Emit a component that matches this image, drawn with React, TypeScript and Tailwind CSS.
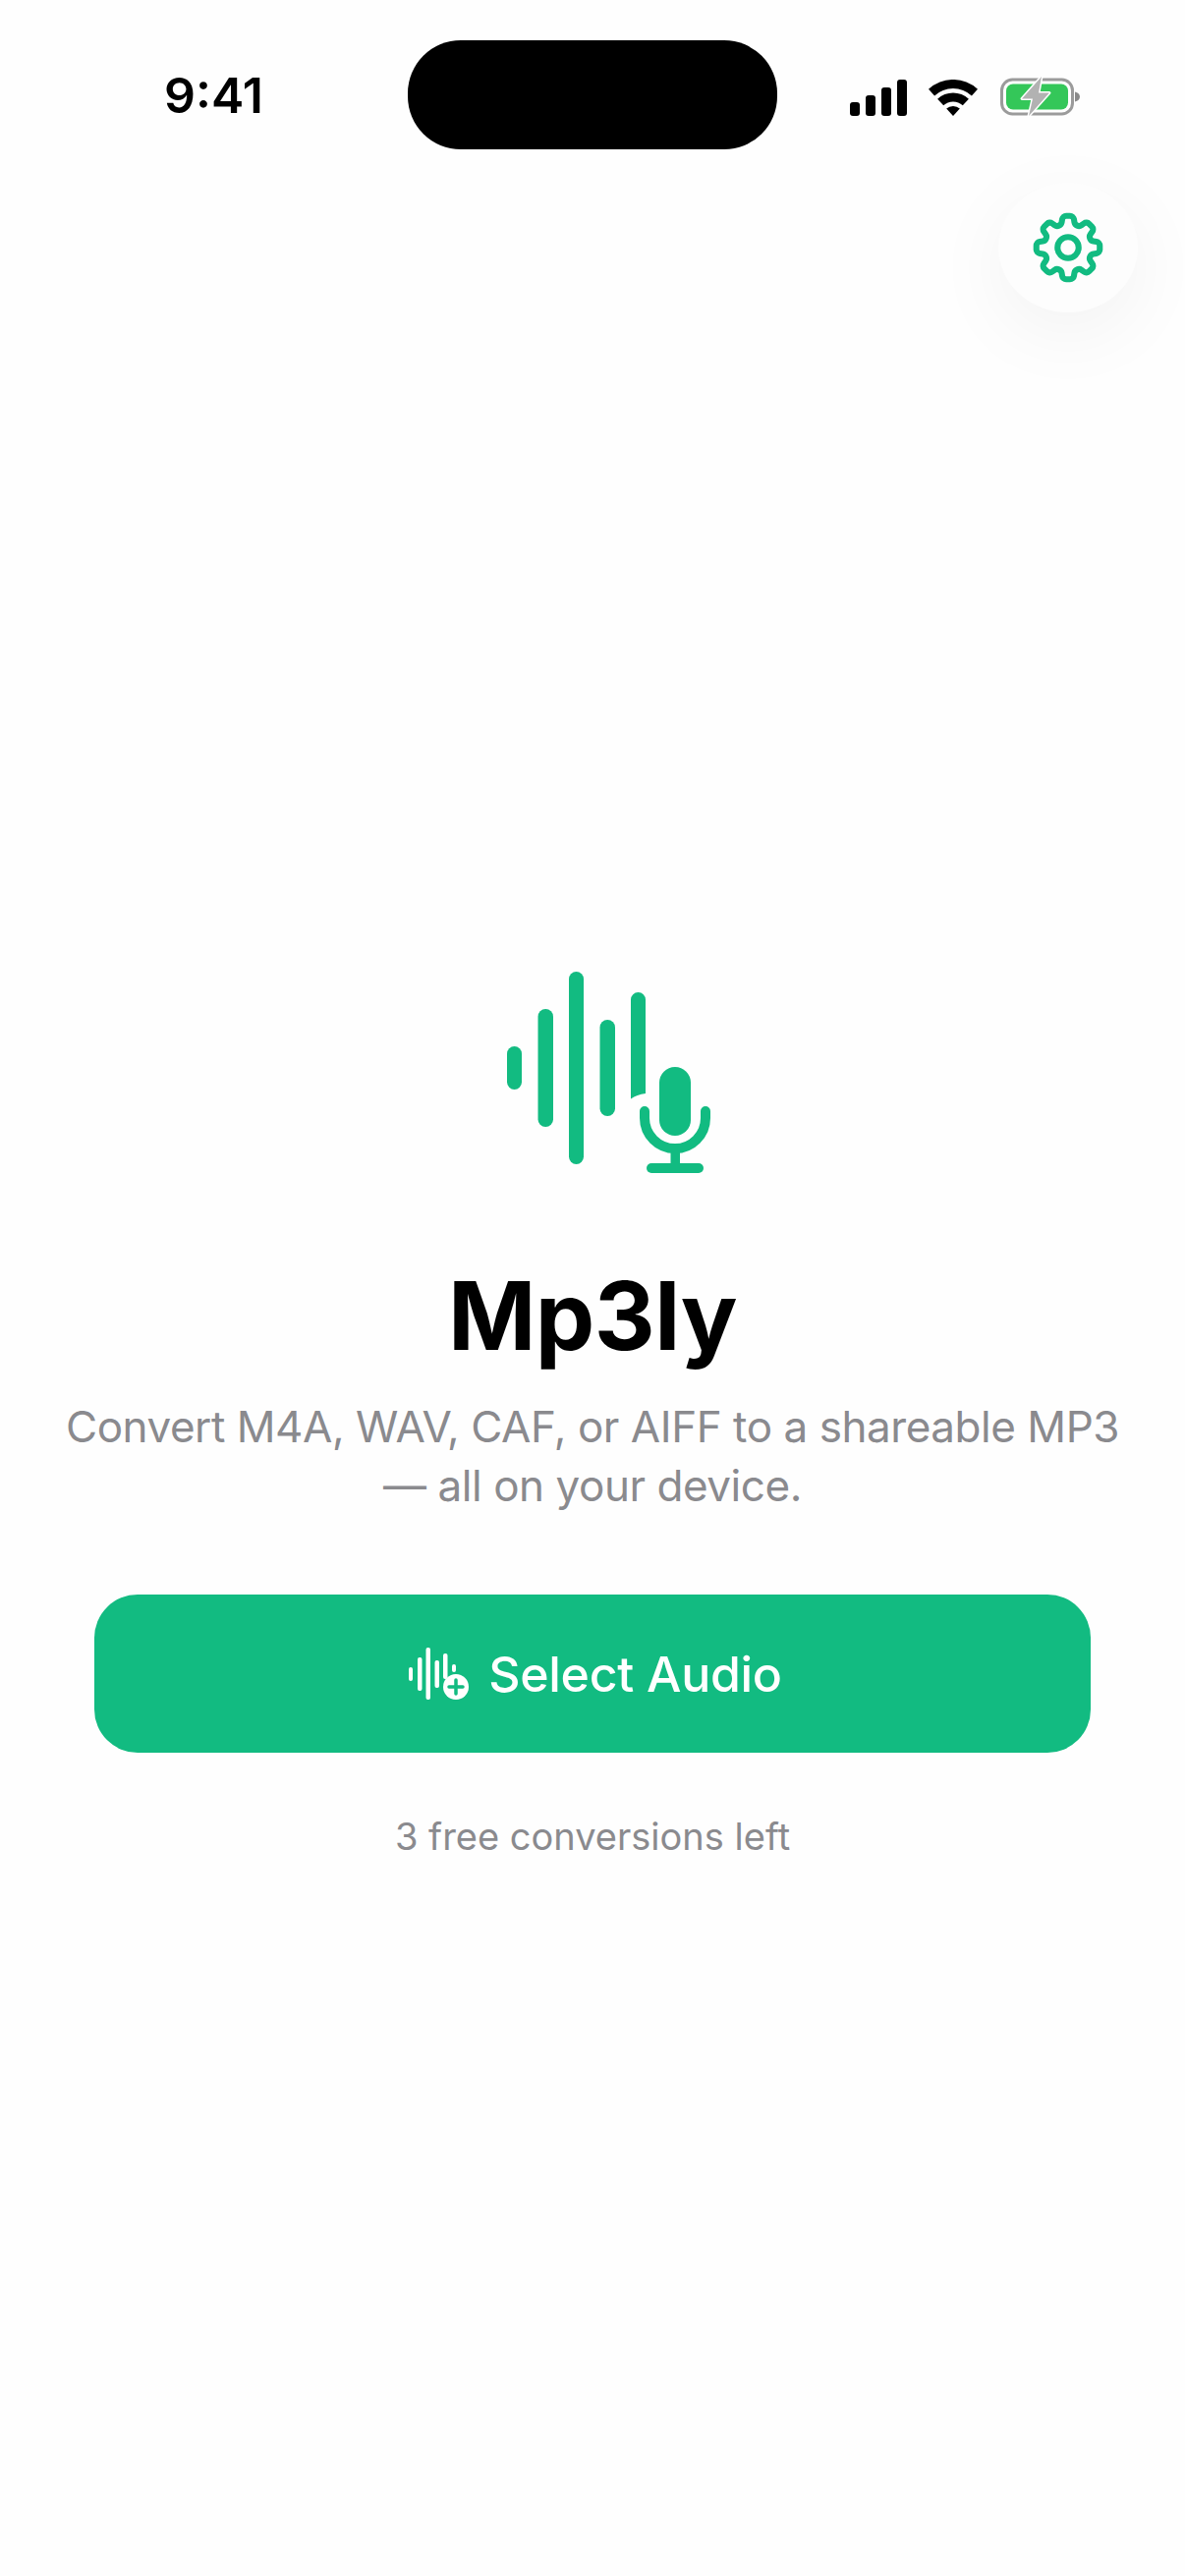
import { HiOutlineCog8Tooth } from 'react-icons/hi2';

const GREEN = '#12bb81';

const SignalIcon = () => (
  <svg width="58" height="37" viewBox="0 0 58 37" fill="#000">
    <rect x="0" y="23" width="10" height="14" rx="3" />
    <rect x="16" y="16" width="10" height="21" rx="3" />
    <rect x="32" y="8" width="10" height="29" rx="3" />
    <rect x="48" y="0" width="10" height="37" rx="3" />
  </svg>
);

const WifiIcon = () => (
  <svg width="50" height="37" viewBox="0 0 50 37" fill="#000">
    <path d="M0 9.7A37 37 0 0 1 50 9.7L43.9 16.4A28 28 0 0 0 6.1 16.4Z" />
    <path d="M9.1 19.7A23.5 23.5 0 0 1 40.9 19.7L34.8 26.3A14.5 14.5 0 0 0 15.2 26.3Z" />
    <path d="M18.2 29.6A10 10 0 0 1 31.8 29.6L25 37Z" />
  </svg>
);

const BatteryIcon = () => (
  <svg width="82" height="44" viewBox="0 0 82 44">
    <rect x="1.5" y="5" width="72" height="35" rx="11" fill="none" stroke="#9b9b9b" strokeWidth="3" />
    <rect x="6" y="9.5" width="63" height="26" rx="7" fill="#34c759" />
    <path d="M76 17.5c3 .6 5 2.4 5 5s-2 4.400-5 5Z" fill="#8a8a8a" />
    <path
      d="M42 2 22 24.500h11L29 42 50 18.500H39Z"
      fill="#b2b2b2"
      stroke="#fff"
      strokeWidth="3"
      strokeLinejoin="round"
      paintOrder="stroke"
    />
  </svg>
);

// waveform with a mic sitting on its lower right corner
const LogoIcon = () => (
  <svg width="260" height="240" viewBox="490 970 260 240" fill={GREEN} className="ml-[34px]">
    <rect x="516" y="1065" width="15" height="44" rx="7.500" />
    <rect x="547.500" y="1027" width="15.500" height="120" rx="7.700" />
    <rect x="579" y="989" width="15" height="196" rx="7.500" />
    <rect x="610.500" y="1038" width="15.500" height="98" rx="7.700" />
    <path d="M642 1118.500Q648 1114 657 1113V1017.500a7.500 7.500 0 0 0-15 0Z" />
    <rect x="671" y="1086" width="32" height="70" rx="16" />
    <path d="M656 1131v7a31 31 0 0 0 62 0v-7" fill="none" stroke={GREEN} strokeWidth="10" strokeLinecap="round" />
    <rect x="682.500" y="1170" width="9.500" height="18" />
    <rect x="658" y="1184" width="58" height="10" rx="5" />
  </svg>
);

const AddAudioIcon = () => (
  <svg width="70" height="66" viewBox="410 1670 70 66" fill="#fff">
    <rect x="416" y="1696" width="4" height="14" rx="2" />
    <rect x="425" y="1686" width="4.500" height="34" rx="2" />
    <rect x="433.500" y="1676" width="4.500" height="53" rx="2" />
    <rect x="442.500" y="1689" width="4.500" height="28" rx="2" />
    <rect x="451" y="1682" width="4.500" height="26" rx="2" />
    <rect x="460" y="1693" width="4" height="8" rx="2" />
    <circle cx="464" cy="1716" r="13" />
    <path d="M464 1709v14M457 1716h14" stroke={GREEN} strokeWidth="3.500" strokeLinecap="round" />
  </svg>
);

export default function App() {
  return (
    <div className="min-h-[2622px] w-[1206px] bg-[#fefefe] font-['Inter',sans-serif]">
      {/* Status bar */}
      <div className="flex items-start pt-[41px]">
        <div className="flex h-[111px] w-[415px] items-center pl-[167px]">
          <span className="text-[50px] leading-none font-semibold text-black">9:41</span>
        </div>
        <div className="h-[111px] w-[376px] rounded-[54px] bg-black" />
        <div className="flex items-center pt-[38px] pl-[74px]">
          <SignalIcon />
          <div className="ml-[22px]">
            <WifiIcon />
          </div>
          <div className="ml-[23px] -mt-[3px]">
            <BatteryIcon />
          </div>
        </div>
      </div>

      {/* Settings */}
      <div className="mt-[34px] flex justify-end pr-[48px]">
        <button className="flex h-[132px] w-[142px] items-center justify-center rounded-[50%] bg-[#fdfdfd] shadow-[0_20px_80px_rgba(0,0,0,0.05)]">
          <HiOutlineCog8Tooth size={86} color={GREEN} strokeWidth={1.7} />
        </button>
      </div>

      {/* Main */}
      <div className="mt-[652px] flex flex-col items-center">
        <LogoIcon />
        <h1 className="mt-[69px] text-[96px] leading-[120px] font-bold tracking-[-0.5px] text-black">Mp3ly</h1>
        <p className="mt-[23px] w-[1100px] text-center text-[44px] leading-[60px] tracking-[-0.45px] text-[#8a8a8e]">
          Convert M4A, WAV, CAF, or AIFF to a shareable MP3
          <br />— all on your device.
        </p>
        <button className="mt-[81px] flex h-[161px] w-[1014px] items-center justify-center gap-[17px] rounded-[44px] bg-[#12bb81]">
          <AddAudioIcon />
          <span className="text-[50px] leading-none font-medium tracking-[-0.3px] text-white">Select Audio</span>
        </button>
        <p className="mt-[62px] text-[38px] leading-[46px] text-[#8a8a8e]">3 free conversions left</p>
      </div>
    </div>
  );
}
